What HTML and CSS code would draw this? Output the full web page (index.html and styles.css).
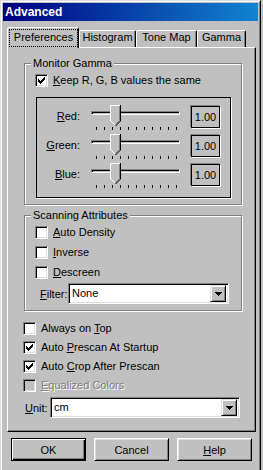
FILE: index.html
```html
<!DOCTYPE html>
<html>
<head>
  <title>Advanced</title>
  <link rel="stylesheet" href="styles.css">
</head>
<body>
  <div class="window">
    <div class="frame">
      <div class="titlebar">Advanced</div>

      <div class="tabs">
        <div class="tab active"><span class="focus">Preferences</span></div>
        <div class="tab tab-hist">Histogram</div>
        <div class="tab tab-tone">Tone Map</div>
        <div class="tab tab-gamma">Gamma</div>
      </div>

      <div class="panel">
        <fieldset class="group group-gamma">
          <legend>Monitor Gamma</legend>
          <div class="check check-keep">
            <span class="box checked"><svg width="7" height="7" viewBox="0 0 7 7" shape-rendering="crispEdges"><path d="M0 2h1v3H0zM1 3h1v3H1zM2 4h1v3H2zM3 3h1v3H3zM4 2h1v3H4zM5 1h1v3H5zM6 0h1v3H6z" fill="#000"/></svg></span>
            <span><u>K</u>eep R, G, B values the same</span>
          </div>
          <div class="sliders">
            <div class="slider-row">
              <span class="slider-label"><u>R</u>ed:</span>
              <div class="slider">
                <div class="track"></div>
                <svg class="thumb" width="11" height="21" viewBox="0 0 11 21"><path d="M0 0H11V16L5.5 21.5L0 16Z" fill="#c0c0c0"/><path d="M0.5 16V0.5H10" stroke="#fff" fill="none"/><path d="M0.5 15.5L5 20" stroke="#fff" fill="none"/><path d="M10.5 0V16L5.5 21" stroke="#000" fill="none"/><path d="M9.5 1V15.5L5.5 19.5" stroke="#808080" fill="none"/></svg>
                <div class="ticks"><i></i><i></i><i></i><i></i><i></i><i></i><i></i><i></i><i></i><i></i><i></i></div>
              </div>
              <div class="value">1.00</div>
            </div>
            <div class="slider-row">
              <span class="slider-label"><u>G</u>reen:</span>
              <div class="slider">
                <div class="track"></div>
                <svg class="thumb" width="11" height="21" viewBox="0 0 11 21"><path d="M0 0H11V16L5.5 21.5L0 16Z" fill="#c0c0c0"/><path d="M0.5 16V0.5H10" stroke="#fff" fill="none"/><path d="M0.5 15.5L5 20" stroke="#fff" fill="none"/><path d="M10.5 0V16L5.5 21" stroke="#000" fill="none"/><path d="M9.5 1V15.5L5.5 19.5" stroke="#808080" fill="none"/></svg>
                <div class="ticks"><i></i><i></i><i></i><i></i><i></i><i></i><i></i><i></i><i></i><i></i><i></i></div>
              </div>
              <div class="value">1.00</div>
            </div>
            <div class="slider-row">
              <span class="slider-label"><u>B</u>lue:</span>
              <div class="slider">
                <div class="track"></div>
                <svg class="thumb" width="11" height="21" viewBox="0 0 11 21"><path d="M0 0H11V16L5.5 21.5L0 16Z" fill="#c0c0c0"/><path d="M0.5 16V0.5H10" stroke="#fff" fill="none"/><path d="M0.5 15.5L5 20" stroke="#fff" fill="none"/><path d="M10.5 0V16L5.5 21" stroke="#000" fill="none"/><path d="M9.5 1V15.5L5.5 19.5" stroke="#808080" fill="none"/></svg>
                <div class="ticks"><i></i><i></i><i></i><i></i><i></i><i></i><i></i><i></i><i></i><i></i><i></i></div>
              </div>
              <div class="value">1.00</div>
            </div>
          </div>
        </fieldset>

        <fieldset class="group group-scan">
          <legend>Scanning Attributes</legend>
          <div class="check-list">
            <div class="check"><span class="box"></span><span><u>A</u>uto Density</span></div>
            <div class="check"><span class="box"></span><span><u>I</u>nverse</span></div>
            <div class="check"><span class="box"></span><span><u>D</u>escreen</span></div>
          </div>
          <div class="field field-filter">
            <span class="field-label"><u>F</u>ilter:</span>
            <div class="combo combo-filter">
              <span class="combo-text">None</span>
              <span class="combo-btn"><svg width="7" height="4" viewBox="0 0 7 4" shape-rendering="crispEdges"><path d="M0 0h7v1H0zM1 1h5v1H1zM2 2h3v1H2zM3 3h1v1H3z" fill="#000"/></svg></span>
            </div>
          </div>
        </fieldset>

        <div class="options">
          <div class="check"><span class="box"></span><span>Always on <u>T</u>op</span></div>
          <div class="check"><span class="box checked"><svg width="7" height="7" viewBox="0 0 7 7" shape-rendering="crispEdges"><path d="M0 2h1v3H0zM1 3h1v3H1zM2 4h1v3H2zM3 3h1v3H3zM4 2h1v3H4zM5 1h1v3H5zM6 0h1v3H6z" fill="#000"/></svg></span><span>Auto <u>P</u>rescan At Startup</span></div>
          <div class="check"><span class="box checked"><svg width="7" height="7" viewBox="0 0 7 7" shape-rendering="crispEdges"><path d="M0 2h1v3H0zM1 3h1v3H1zM2 4h1v3H2zM3 3h1v3H3zM4 2h1v3H4zM5 1h1v3H5zM6 0h1v3H6z" fill="#000"/></svg></span><span>Auto <u>C</u>rop After Prescan</span></div>
          <div class="check disabled"><span class="box"></span><span><u>E</u>qualized Colors</span></div>
        </div>

        <div class="field field-unit">
          <span class="field-label"><u>U</u>nit:</span>
          <div class="combo combo-unit">
            <span class="combo-text">cm</span>
            <span class="combo-btn"><svg width="7" height="4" viewBox="0 0 7 4" shape-rendering="crispEdges"><path d="M0 0h7v1H0zM1 1h5v1H1zM2 2h3v1H2zM3 3h1v1H3z" fill="#000"/></svg></span>
          </div>
        </div>
      </div>

      <div class="buttons">
        <button class="btn default">OK</button>
        <button class="btn">Cancel</button>
        <button class="btn"><u>H</u>elp</button>
      </div>
    </div>
  </div>
</body>
</html>
```

FILE: styles.css
```css
body {
  margin: 0;
  background-color: #c0c0c0;
  font-family: "Liberation Sans", Arial, sans-serif;
  font-size: 11px;
  color: #000;
  overflow: hidden;
}

/* window frame */
.window {
  width: 261px;
  height: 474px;
  box-sizing: border-box;
  border: 1px solid;
  border-color: #dfdfdf #000 #000 #dfdfdf;
}
.frame {
  height: 100%;
  box-sizing: border-box;
  border: 1px solid;
  border-color: #fff #808080 #808080 #fff;
  padding: 1px;
}
.titlebar {
  height: 18px;
  padding-left: 2px;
  background: linear-gradient(to right, #000080, #1084d0);
  color: #fff;
  font-weight: bold;
  font-size: 12px;
  line-height: 18px;
}

/* tabs */
.tabs {
  display: flex;
  align-items: flex-end;
  height: 20px;
  margin: 6px 0 0 4px;
  position: relative;
  z-index: 1;
}
.tab {
  box-sizing: border-box;
  height: 17px;
  border: 1px solid;
  border-bottom: 0;
  border-color: #fff #000 transparent #fff;
  border-radius: 2px 2px 0 0;
  box-shadow: inset -1px 0 0 #808080;
  background-color: #c0c0c0;
  text-align: center;
  line-height: 12px;
  padding-top: 0;
}
.tab.active {
  width: 72px;
  height: 21px;
  margin-bottom: -1px;
}
.tab-hist { width: 57px; }
.tab-tone { width: 61px; }
.tab-gamma { width: 49px; }
.focus {
  display: block;
  height: 18px;
  margin: 1px 0 0 1px;
  line-height: 16px;
  outline: 1px dotted #000;
  outline-offset: -1px;
}

/* page */
.panel {
  box-sizing: border-box;
  height: 385px;
  margin: 0 2px 0 4px;
  padding: 0 0 0 16px;
  border: 1px solid;
  border-color: #fff #000 #000 #fff;
  box-shadow: inset -1px -1px 0 #808080;
}

.group {
  width: 218px;
  box-sizing: border-box;
  margin: 0;
  padding: 4px 0 6px 6px;
  border: 1px solid #808080;
  box-shadow: inset 1px 1px 0 #fff, 1px 1px 0 #fff;
  min-width: 0;
}
.group legend {
  padding: 0 2px;
  line-height: 13px;
  background-color: #c0c0c0;
}
.group-gamma { margin-top: 9px; }
.group-scan { margin-top: 4px; }

/* checkboxes */
.check {
  display: flex;
  align-items: center;
  gap: 5px;
  height: 13px;
  line-height: 13px;
  white-space: nowrap;
}
.check-keep { margin-left: 4px; }
.box {
  width: 13px;
  height: 13px;
  box-sizing: border-box;
  flex: none;
  border: 1px solid;
  border-color: #808080 #fff #fff #808080;
  box-shadow: inset 1px 1px 0 #000, inset -1px -1px 0 #dfdfdf;
  background-color: #fff;
  padding: 2px 0 0 2px;
}
.box svg { display: block; }
.check.disabled { color: #808080; text-shadow: 1px 1px 0 #fff; }
.check.disabled .box { background-color: #c0c0c0; }

.check-list {
  display: flex;
  flex-direction: column;
  gap: 7px;
  margin-left: 4px;
}

/* sliders */
.sliders {
  width: 195px;
  height: 101px;
  box-sizing: border-box;
  margin: 10px 0 0 5px;
  padding-top: 7px;
  border: 1px solid #000;
  box-shadow: 1px 1px 0 #fff;
}
.slider-row {
  display: flex;
  align-items: flex-start;
  height: 29px;
}
.slider-label {
  width: 43px;
  text-align: right;
  margin-top: 5px;
  line-height: 13px;
}
.slider {
  position: relative;
  width: 89px;
  height: 29px;
  margin-left: 11px;
}
.track {
  height: 4px;
  box-sizing: border-box;
  margin-top: 6px;
  border: 1px solid;
  border-color: #808080 #fff #fff #808080;
  box-shadow: inset 1px 1px 0 #000;
}
.thumb {
  position: absolute;
  left: 19px;
  top: 0;
  display: block;
}
.ticks {
  display: flex;
  justify-content: space-between;
  margin: 12px 3px 0 5px;
}
.ticks i {
  width: 1px;
  height: 3px;
  background-color: #000;
}
.value {
  width: 29px;
  height: 22px;
  box-sizing: border-box;
  margin: 1px 0 0 11px;
  border: 1px solid #000;
  box-shadow: -1px -1px 0 #808080, 1px 1px 0 #fff;
  text-align: center;
  line-height: 20px;
}

/* combo boxes */
.field {
  display: flex;
  align-items: center;
}
.field-filter { margin: 4px 0 0 9px; }
.field-filter .field-label { width: 28px; }
.field-unit { margin: 5px 0 0 1px; }
.field-unit .field-label { width: 25px; }
.combo {
  display: flex;
  align-items: center;
  height: 21px;
  box-sizing: border-box;
  padding: 2px;
  border: 1px solid;
  border-color: #808080 #fff #fff #808080;
  box-shadow: inset 1px 1px 0 #000, inset -1px -1px 0 #dfdfdf;
  background-color: #fff;
}
.combo-filter { width: 161px; }
.combo-unit { width: 190px; }
.combo-text {
  flex: 1;
  padding-left: 1px;
  line-height: 17px;
}
.combo-btn {
  display: flex;
  align-items: center;
  justify-content: center;
  width: 16px;
  height: 17px;
  box-sizing: border-box;
  border: 1px solid;
  border-color: #dfdfdf #000 #000 #dfdfdf;
  box-shadow: inset 1px 1px 0 #fff, inset -1px -1px 0 #808080;
  background-color: #c0c0c0;
}
.combo-btn svg { display: block; }

/* general options */
.options {
  display: flex;
  flex-direction: column;
  gap: 6px;
  margin: 11px 0 0 -1px;
}

/* buttons */
.buttons {
  display: flex;
  gap: 8px;
  margin: 6px 0 0 8px;
}
.btn {
  width: 75px;
  height: 23px;
  box-sizing: border-box;
  padding: 0;
  border: 1px solid;
  border-color: #fff #000 #000 #fff;
  box-shadow: inset 1px 1px 0 #dfdfdf, inset -1px -1px 0 #808080;
  background-color: #c0c0c0;
  font-family: "Liberation Sans", Arial, sans-serif;
  font-size: 11px;
  color: #000;
}
.btn.default {
  border-color: #000;
  box-shadow: inset 1px 1px 0 #fff, inset -1px -1px 0 #000, inset -2px -2px 0 #808080;
}
```
